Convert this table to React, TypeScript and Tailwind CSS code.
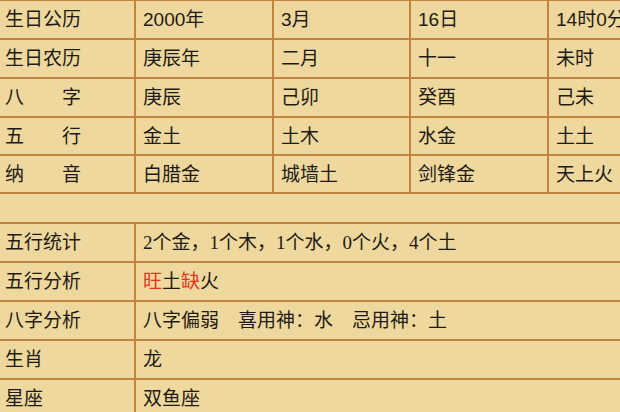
import React from "react";

const line = "border-[#c0843c]";

const topRows: string[][] = [
  ["生日公历", "2000年", "3月", "16日", "14时0分"],
  ["生日农历", "庚辰年", "二月", "十一", "未时"],
  ["八　　字", "庚辰", "己卯", "癸酉", "己未"],
  ["五　　行", "金土", "土木", "水金", "土土"],
  ["纳　　音", "白腊金", "城墙土", "剑锋金", "天上火"],
];

const rowHeights = ["h-[39px]", "h-[39px]", "h-[39px]", "h-[38px]", "h-[38px]"];

function Cell({
  children,
  first,
  last,
}: {
  children: React.ReactNode;
  first?: boolean;
  last?: boolean;
}) {
  return (
    <div
      className={`flex items-center whitespace-nowrap border-b-2 ${line} ${
        last ? "" : "border-r-2"
      } ${first ? "pl-[5px]" : "pl-[7px]"}`}
    >
      {children}
    </div>
  );
}

export default function App() {
  return (
    <div
      className="w-[620px] h-[412px] overflow-hidden bg-[#efd89d] text-[19px] leading-none text-[#1e1a14]"
      style={{ fontFamily: '"Liberation Sans", "Noto Sans CJK SC", sans-serif' }}
    >
      {/* birth info table */}
      <div className={`w-[687px] border-t ${line}`}>
        {topRows.map((row, i) => (
          <div
            key={i}
            className={`grid grid-cols-[136px_138px_137px_138px_138px] ${rowHeights[i]}`}
          >
            {row.map((text, j) => (
              <Cell key={j} first={j === 0}>
                {text}
              </Cell>
            ))}
          </div>
        ))}
      </div>

      <div className="h-[28px]" />

      {/* analysis table */}
      <div className={`w-[620px] border-t-2 ${line}`}>
        <div className="grid grid-cols-[136px_1fr] h-[39px]">
          <Cell first>五行统计</Cell>
          <Cell last>
            <span style={{ fontFamily: '"Liberation Serif", "Noto Sans CJK SC", serif' }}>
              2个金，1个木，1个水，0个火，4个土
            </span>
          </Cell>
        </div>
        <div className="grid grid-cols-[136px_1fr] h-[39px]">
          <Cell first>五行分析</Cell>
          <Cell last>
            <span className="text-[#e2361f]">旺</span>土
            <span className="text-[#e2361f]">缺</span>火
          </Cell>
        </div>
        <div className="grid grid-cols-[136px_1fr] h-[39px]">
          <Cell first>八字分析</Cell>
          <Cell last>八字偏弱　喜用神：水　忌用神：土</Cell>
        </div>
        <div className="grid grid-cols-[136px_1fr] h-[39px]">
          <Cell first>生肖</Cell>
          <Cell last>龙</Cell>
        </div>
        <div className="grid grid-cols-[136px_1fr] h-[39px]">
          <Cell first>星座</Cell>
          <Cell last>双鱼座</Cell>
        </div>
      </div>
    </div>
  );
}
